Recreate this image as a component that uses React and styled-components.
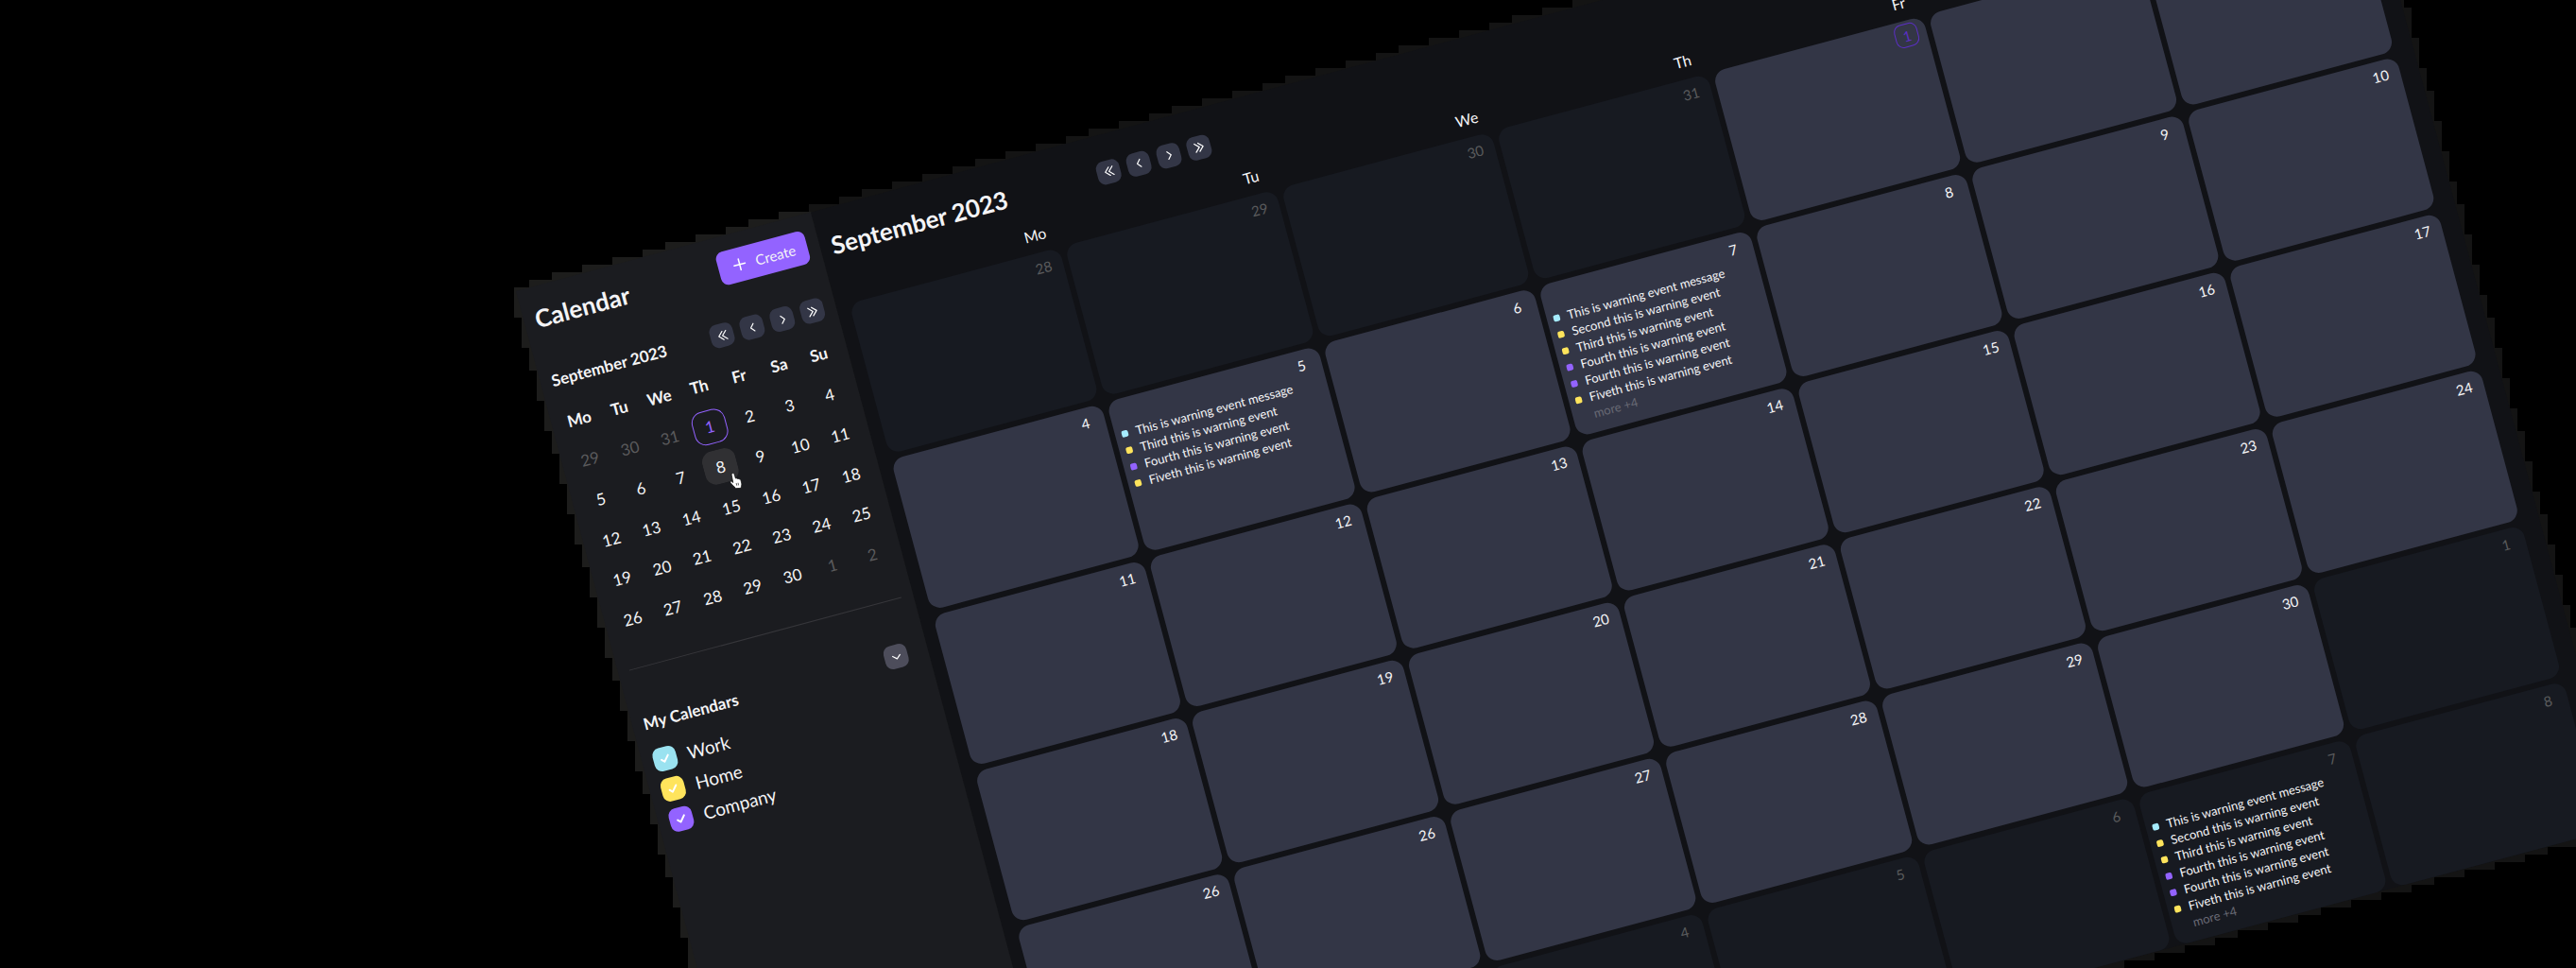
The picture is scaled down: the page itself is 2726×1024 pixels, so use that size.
import React, { useEffect, useLayoutEffect, useRef, useState } from "react";
import styled, { createGlobalStyle } from "styled-components";

const TILT = 15;
const BLOCK = 8;

const color = {
  page: "#000000",
  sidebar: "#1b1c20",
  sidebarFringe: "#1d1d1c",
  main: "#111216",
  mainFringe: "#141414",
  cell: "#333646",
  cellMuted: "#171a21",
  control: "#333646",
  controlSoft: "#4d4d5b",
  accent: "#9363ff",
  accentDeep: "#5b2fc4",
  cyan: "#9ae2f0",
  cyanDot: "#a6ecff",
  yellow: "#ffe45c",
  text: "#f4f4f6",
  muted: "#5a5a5c",
};

const GlobalStyle = createGlobalStyle`
  *, *::before, *::after { box-sizing: border-box; }
  body {
    margin: 0;
    background: ${color.page};
    color: ${color.text};
    font-family: Lato, "Noto Sans", "Liberation Sans", sans-serif;
    font-size: 16px;
  }
  button, input { font: inherit; color: inherit; margin: 0; padding: 0; }
  h1, h2, h3, ul { margin: 0; padding: 0; font-weight: inherit; list-style: none; }
`;

const Stage = styled.main`
  position: relative;
  height: 100vh;
  padding: 308px 0 0 20.02vw;
  overflow: hidden;
`;

const Fringe = styled.div`
  position: absolute;
  inset: 0;
  background: ${(p) => p.$color};
`;

const Panel = styled.div`
  position: relative;
  display: flex;
  width: 73.6vw;
  transform: rotate(-${TILT}deg);
  transform-origin: 0 0;
`;

const Sidebar = styled.aside`
  flex: 0 0 323px;
  background: ${color.sidebar};
`;

const Board = styled.section`
  flex: 1;
  min-width: 0;
  padding: 24px 20px 0 12px;
  background: ${color.main};
`;

const SideRow = styled.div`
  display: flex;
  align-items: center;
  justify-content: space-between;
  padding: ${(p) => p.$pad};
`;

const Title = styled.h1`
  font-size: 26px;
  line-height: 32px;
  font-weight: 700;
  min-width: ${(p) => (p.$wide ? "291px" : "0")};
`;

const Subtitle = styled.h2`
  font-size: 17px;
  line-height: 24px;
  font-weight: 700;
`;

const CreateButton = styled.button`
  display: flex;
  align-items: center;
  gap: 10px;
  height: 36px;
  padding: 0 13px 0 16px;
  border: 0;
  border-radius: 8px;
  background: ${color.accent};
  font-size: 15px;
`;

const NavGroup = styled.div`
  display: flex;
  gap: 8px;
`;

const IconButton = styled.button`
  display: grid;
  place-items: center;
  width: 25px;
  height: 25px;
  border: 0;
  border-radius: 8px;
  background: ${(p) => (p.$soft ? color.controlSoft : color.control)};
`;

const Glyph = styled.svg`
  display: block;
  fill: none;
  stroke: #fff;
  stroke-linecap: round;
  stroke-linejoin: round;
`;

const MiniGrid = styled.div`
  display: grid;
  grid-template-columns: repeat(7, 1fr);
  margin: 12px 9px 0 8px;
`;

const MiniCell = styled.div`
  position: relative;
  display: grid;
  place-items: center;
  aspect-ratio: 1;
  font-size: 17px;
  font-weight: ${(p) => (p.$head ? 700 : 400)};
`;

const MiniDay = styled.button`
  width: 36px;
  height: 36px;
  border: 1px solid ${(p) => (p.$today ? color.accent : "transparent")};
  border-radius: 12px;
  background: ${(p) => (p.$hover ? "#303033" : "transparent")};
  color: ${(p) => (p.$today ? color.accent : p.$muted ? color.muted : color.text)};
`;

const Pointer = styled.svg`
  position: absolute;
  left: 27px;
  top: 32px;
  transform: rotate(${TILT}deg);
`;

const Divider = styled.hr`
  height: 1px;
  margin: 30px 13px 0 12px;
  border: 0;
  background: #36363a;
`;

const CalendarList = styled.ul`
  display: grid;
  gap: 8px;
  padding: 16px 12px 0;
`;

const CalendarLabel = styled.label`
  display: flex;
  align-items: center;
  gap: 12px;
  font-size: 19px;
  line-height: 25px;
`;

const CheckBox = styled.span`
  display: grid;
  width: 25px;
  height: 25px;
  > * { grid-area: 1 / 1; place-self: center; }
  input {
    appearance: none;
    width: 25px;
    height: 25px;
    border-radius: 8px;
    background: ${(p) => p.$color};
  }
  svg { pointer-events: none; }
`;

const BoardHeader = styled.header`
  display: flex;
  align-items: center;
  padding-bottom: 14px;
`;

const WeekGrid = styled.div`
  display: grid;
  grid-template-columns: repeat(7, 1fr);
  gap: 6px;
  margin-left: 2px;
`;

const Weekday = styled.div`
  display: flex;
  justify-content: center;
  justify-self: end;
  width: 25px;
  height: 34px;
  margin-right: 9px;
  font-size: 16px;
  line-height: 30px;
`;

const DayGrid = styled(WeekGrid)`
  grid-auto-rows: 165px;
`;

const Day = styled.div`
  display: flex;
  flex-direction: column;
  padding: 3px 9px 0 7px;
  border-radius: 13px;
  background: ${(p) => (p.$muted ? color.cellMuted : color.cell)};
`;

const DayNumber = styled.button`
  align-self: flex-end;
  width: 25px;
  height: 25px;
  border: ${(p) => (p.$today ? `1px solid ${color.accentDeep}` : 0)};
  border-radius: 8px;
  background: none;
  color: ${(p) => (p.$today ? color.accentDeep : p.$muted ? color.muted : color.text)};
  font-size: 15px;
`;

const Events = styled.ul`
  font-size: 13px;
  line-height: 18px;
`;

const Event = styled.li`
  display: flex;
  align-items: center;
  gap: 8px;
  white-space: nowrap;
  &::before {
    content: "";
    width: 7px;
    height: 7px;
    border-radius: 2px;
    background: ${(p) => p.$color};
  }
`;

const More = styled(Event)`
  color: #686974;
`;

const CHEVRONS = {
  first: ["M7.5 2.5 3 7l4.5 4.5", "M11.5 2.5 7 7l4.5 4.5"],
  prev: ["M8.5 3 5 7l3.5 4"],
  next: ["M5.5 3 9 7l-3.5 4"],
  last: ["M2.5 2.5 7 7l-4.5 4.5", "M6.5 2.5 11 7l-4.5 4.5"],
  down: ["M3 5.5 7 9l4-3.5"],
};

function Chevron({ kind }) {
  return (
    <Glyph width="14" height="14" viewBox="0 0 14 14" strokeWidth="1.2" aria-hidden="true">
      {CHEVRONS[kind].map((d) => (
        <path key={d} d={d} />
      ))}
    </Glyph>
  );
}

function MonthNav() {
  const items = [
    ["first", "Previous year"],
    ["prev", "Previous month"],
    ["next", "Next month"],
    ["last", "Next year"],
  ];
  return (
    <NavGroup>
      {items.map(([kind, label]) => (
        <IconButton key={kind} type="button" aria-label={label}>
          <Chevron kind={kind} />
        </IconButton>
      ))}
    </NavGroup>
  );
}

const WEEK = ["Mo", "Tu", "We", "Th", "Fr", "Sa", "Su"];

const MINI_DAYS = [
  29, 30, 31, 1, 2, 3, 4,
  5, 6, 7, 8, 9, 10, 11,
  12, 13, 14, 15, 16, 17, 18,
  19, 20, 21, 22, 23, 24, 25,
  26, 27, 28, 29, 30, 1, 2,
];

const BOARD_DAYS = [
  28, 29, 30, 31, 1, 2, 3,
  4, 5, 6, 7, 8, 9, 10,
  11, 12, 13, 14, 15, 16, 17,
  18, 19, 20, 21, 22, 23, 24,
  26, 26, 27, 28, 29, 30, 1,
  2, 3, 4, 5, 6, 7, 8,
];

const FIRST = ["This is warning event message", color.cyanDot];
const SECOND = ["Second this is warning event", color.yellow];
const THIRD = ["Third this is warning event", color.yellow];
const FOURTH = ["Fourth this is warning event", color.accent];
const FIVETH = ["Fiveth this is warning event", color.yellow];
const FULL = { list: [FIRST, SECOND, THIRD, FOURTH, FOURTH, FIVETH], more: 4 };

const EVENTS = {
  8: { list: [FIRST, THIRD, FOURTH, FIVETH] },
  10: FULL,
  40: FULL,
};

const CALENDARS = [
  ["Work", color.cyan],
  ["Home", color.yellow],
  ["Company", color.accent],
];

function HandPointer() {
  return (
    <Pointer width="14" height="18" viewBox="0 0 14 18" aria-hidden="true">
      <path
        d="M3.2 1.2c.9-.5 1.8 0 2.1.9l1.3 4.4c.6-.5 1.5-.3 1.8.4.6-.4 1.5-.2 1.8.5.9-.3 1.6.1 1.9 1l.8 3.1c.3 1.3.1 2.4-.3 3.5l-.3 1.8-5.7.3-.6-1.1C4.5 14.7 2.3 13 1.1 10.9c-.5-.9.6-1.8 1.5-1.1l1.3 1.1L2.3 2.8c-.2-.7.3-1.3.9-1.6z"
        fill="#fff"
        stroke="#111"
        strokeWidth=".8"
      />
      <path d="M7.3 11.5l.6 2.6M9.2 11.2l.5 2.6" stroke="#111" strokeWidth=".7" fill="none" />
    </Pointer>
  );
}

/* Outline of every block touched by a tilted rectangle. */
function blockOutline(x, y, width, height) {
  const a = (TILT * Math.PI) / 180;
  const cos = Math.cos(a);
  const sin = Math.sin(a);
  const at = (u, v) => [x + u * cos + v * sin, y - u * sin + v * cos];
  const corners = [at(0, 0), at(width, 0), at(width, height), at(0, height)];
  const ys = corners.map((c) => c[1]);
  const start = Math.floor(Math.min(...ys) / BLOCK) * BLOCK;
  const left = [];
  const right = [];
  for (let top = start; top < Math.max(...ys); top += BLOCK) {
    const xs = corners.filter((c) => c[1] >= top && c[1] <= top + BLOCK).map((c) => c[0]);
    corners.forEach((p, i) => {
      const q = corners[(i + 1) % 4];
      [top, top + BLOCK].forEach((line) => {
        const t = (line - p[1]) / (q[1] - p[1]);
        if (t >= 0 && t <= 1) xs.push(p[0] + t * (q[0] - p[0]));
      });
    });
    const l = Math.floor(Math.min(...xs) / BLOCK) * BLOCK;
    const r = Math.ceil(Math.max(...xs) / BLOCK) * BLOCK;
    left.push([l, top], [l, top + BLOCK]);
    right.push([r, top], [r, top + BLOCK]);
  }
  const points = [...left, ...right.reverse()];
  return `polygon(${points.map(([px, py]) => `${px}px ${py}px`).join(",")})`;
}

function useOutlines(panelRef, sideRef) {
  const [outlines, setOutlines] = useState(["none", "none"]);
  const measure = () => {
    const panel = panelRef.current;
    const side = sideRef.current;
    const { offsetLeft: x, offsetTop: y, offsetHeight: h } = panel;
    setOutlines([
      blockOutline(x, y, panel.offsetWidth, h),
      blockOutline(x, y, side.offsetWidth, h),
    ]);
  };
  useLayoutEffect(measure, []);
  useEffect(() => {
    window.addEventListener("resize", measure);
    return () => window.removeEventListener("resize", measure);
  }, []);
  return outlines;
}

function MiniCalendar() {
  return (
    <MiniGrid>
      {WEEK.map((d) => (
        <MiniCell key={d} $head>
          {d}
        </MiniCell>
      ))}
      {MINI_DAYS.map((d, i) => (
        <MiniCell key={i}>
          <MiniDay type="button" $today={i === 3} $hover={i === 10} $muted={i < 3 || i > 32}>
            {d}
          </MiniDay>
          {i === 10 && <HandPointer />}
        </MiniCell>
      ))}
    </MiniGrid>
  );
}

function BoardDay({ index, day }) {
  const muted = index < 4 || index > 33;
  const events = EVENTS[index];
  return (
    <Day $muted={muted}>
      <DayNumber type="button" $muted={muted} $today={index === 4}>
        {day}
      </DayNumber>
      {events && (
        <Events>
          {events.list.map(([text, dot], i) => (
            <Event key={i} $color={dot}>
              {text}
            </Event>
          ))}
          {events.more && <More $color="transparent">more +{events.more}</More>}
        </Events>
      )}
    </Day>
  );
}

export default function App() {
  const panelRef = useRef(null);
  const sideRef = useRef(null);
  const [panelOutline, sideOutline] = useOutlines(panelRef, sideRef);
  return (
    <>
      <GlobalStyle />
      <Stage>
        <Fringe $color={color.mainFringe} style={{ clipPath: panelOutline }} />
        <Fringe $color={color.sidebarFringe} style={{ clipPath: sideOutline }} />
        <Panel ref={panelRef}>
          <Sidebar ref={sideRef}>
            <SideRow $pad="16px 13px 16px 12px">
              <Title>Calendar</Title>
              <CreateButton type="button">
                <Glyph width="14" height="14" viewBox="0 0 14 14" strokeWidth="1.5" aria-hidden="true">
                  <path d="M7 1v12M1 7h12" />
                </Glyph>
                Create
              </CreateButton>
            </SideRow>
            <SideRow $pad="21px 13px 0 12px">
              <Subtitle>September 2023</Subtitle>
              <MonthNav />
            </SideRow>
            <MiniCalendar />
            <Divider />
            <SideRow $pad="46px 22px 0 12px">
              <Subtitle as="h3">My Calendars</Subtitle>
              <IconButton type="button" $soft aria-label="Collapse">
                <Chevron kind="down" />
              </IconButton>
            </SideRow>
            <CalendarList>
              {CALENDARS.map(([name, tint]) => (
                <li key={name}>
                  <CalendarLabel>
                    <CheckBox $color={tint}>
                      <input type="checkbox" defaultChecked />
                      <Glyph width="11" height="11" viewBox="0 0 11 11" strokeWidth="2" aria-hidden="true">
                        <path d="M1.5 5.8 4.2 8.5 9.3 2.5" />
                      </Glyph>
                    </CheckBox>
                    {name}
                  </CalendarLabel>
                </li>
              ))}
            </CalendarList>
          </Sidebar>
          <Board>
            <BoardHeader>
              <Title as="h2" $wide>September 2023</Title>
              <MonthNav />
            </BoardHeader>
            <WeekGrid>
              {WEEK.map((d) => (
                <Weekday key={d}>{d}</Weekday>
              ))}
            </WeekGrid>
            <DayGrid>
              {BOARD_DAYS.map((d, i) => (
                <BoardDay key={i} index={i} day={d} />
              ))}
            </DayGrid>
          </Board>
        </Panel>
      </Stage>
    </>
  );
}
